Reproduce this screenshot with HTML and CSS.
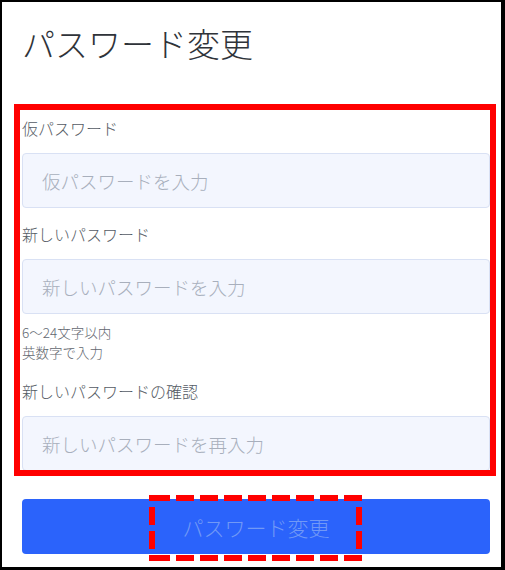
FILE: index.html
```html
<!DOCTYPE html>
<html lang="ja">
<head>
<meta charset="utf-8">
<title>パスワード変更</title>
<link rel="stylesheet" href="styles.css">
</head>
<body>
<div class="screen">
  <h1 class="title">パスワード変更</h1>
  <form class="form">
    <div class="field">
      <label class="label" for="tmp">仮パスワード</label>
      <input class="input" id="tmp" type="password" placeholder="仮パスワードを入力">
    </div>
    <div class="field">
      <label class="label" for="new">新しいパスワード</label>
      <input class="input" id="new" type="password" placeholder="新しいパスワードを入力">
      <p class="hint">6〜24文字以内<br>英数字で入力</p>
    </div>
    <div class="field field-last">
      <label class="label" for="confirm">新しいパスワードの確認</label>
      <input class="input" id="confirm" type="password" placeholder="新しいパスワードを再入力">
    </div>
    <button class="submit" type="button" disabled>パスワード変更</button>
  </form>
  <div class="annot-solid"></div>
  <svg class="annot-dashed" width="213" height="66" viewBox="0 0 213 66">
    <line x1="3" y1="3" x2="213" y2="3" stroke-dasharray="18 6"/>
    <line x1="3" y1="63" x2="213" y2="63" stroke-dasharray="18 6"/>
    <line x1="3" y1="0" x2="3" y2="66" stroke-dasharray="6 6 18 6 18 6 6"/>
    <line x1="210" y1="0" x2="210" y2="66" stroke-dasharray="6 6 18 6 18 6 6"/>
  </svg>
</div>
</body>
</html>
```

FILE: styles.css
```css
* { box-sizing: border-box; }

html, body {
  margin: 0;
  padding: 0;
  background: #ffffff;
}

body {
  font-family: "Noto Sans CJK JP", "Noto Sans", sans-serif;
  font-weight: 300;
}

.screen {
  position: relative;
  width: 505px;
  height: 570px;
  border-style: solid;
  border-color: #000000;
  border-width: 2px 4px 3px 2px;
  padding: 0 11px 0 20px;
  background: #ffffff;
  overflow: hidden;
}

.title {
  margin: 21px 0 0 0;
  font-size: 33px;
  line-height: 40px;
  font-weight: 300;
  color: #2f3339;
}

.form {
  display: flex;
  flex-direction: column;
  margin-top: 53px;
}

.field {
  display: flex;
  flex-direction: column;
  margin-bottom: 14px;
}

.field-last {
  margin-bottom: 28px;
}

.label {
  font-size: 16px;
  line-height: 24px;
  color: #555b64;
  margin-bottom: 13px;
}

.input {
  width: 100%;
  height: 55px;
  margin: 0;
  border: 1px solid #d9e1f4;
  border-radius: 4px;
  background: #f3f6fe;
  padding: 0 16px 0 19px;
  font-family: inherit;
  font-weight: 300;
  font-size: 18.5px;
  color: #333;
  outline: none;
}

.input::placeholder {
  color: #a8afbc;
}

.hint {
  margin: 8px 0 3px 0;
  font-size: 13.5px;
  line-height: 20px;
  color: #62676f;
}

.submit {
  width: 100%;
  height: 55px;
  margin: 0;
  border: none;
  border-radius: 4px;
  background: #2b63fb;
  color: #7199f6;
  font-family: inherit;
  font-size: 21px;
  font-weight: 300;
  padding: 0;
}

.annot-solid {
  position: absolute;
  left: 12px;
  top: 102px;
  width: 482px;
  height: 372px;
  border: 6px solid #ff0000;
  pointer-events: none;
}

.annot-dashed {
  position: absolute;
  left: 147px;
  top: 493px;
  overflow: visible;
  pointer-events: none;
}

.annot-dashed line {
  stroke: #ff0000;
  stroke-width: 6;
  fill: none;
}
```
